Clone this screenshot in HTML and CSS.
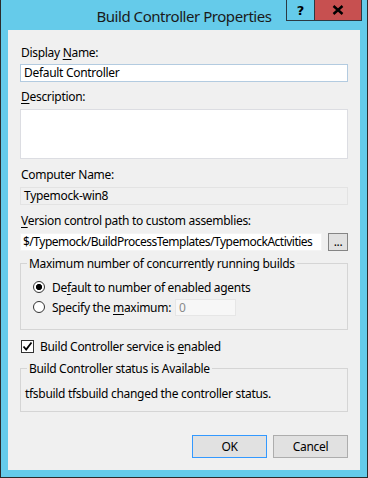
FILE: index.html
```html
<!DOCTYPE html>
<html>
<head>
    <title>Build Controller Properties</title>
    <link rel="stylesheet" href="styles.css">
</head>
<body>
    <div class="window">
        <div class="titlebar">
            <span class="title">Build Controller Properties</span>
            <div class="caption-buttons">
                <span class="cap-btn help">?</span>
                <span class="cap-btn close">
                    <svg width="12" height="10" viewBox="0 0 12 10">
                        <path d="M1.5 1 L10.5 9 M10.5 1 L1.5 9" stroke="#000" stroke-width="2.4"/>
                    </svg>
                </span>
            </div>
        </div>

        <div class="client">
            <label class="field-label">Display <u>N</u>ame:</label>
            <div class="textbox name-box">Default Controller</div>

            <label class="field-label"><u>D</u>escription:</label>
            <div class="textbox desc-box"></div>

            <label class="field-label">Computer Name:</label>
            <div class="textbox readonly">Typemock-win8</div>

            <label class="field-label"><u>V</u>ersion control path to custom assemblies:</label>
            <div class="path-row">
                <div class="textbox path-box">$/Typemock/BuildProcessTemplates/TypemockActivities</div>
                <span class="btn browse">...</span>
            </div>

            <fieldset class="group max-group">
                <legend>Maximum number of concurrently running builds</legend>
                <div class="group-body">
                    <div class="option">
                        <span class="radio checked"></span>
                        <span>De<u>f</u>ault to number of enabled agents</span>
                    </div>
                    <div class="option">
                        <span class="radio"></span>
                        <span>Specify the <u>m</u>aximum:</span>
                        <span class="textbox num-box">0</span>
                    </div>
                </div>
            </fieldset>

            <div class="option check-row">
                <span class="checkbox">
                    <svg width="11" height="11" viewBox="0 0 11 11">
                        <path d="M1.5 5.5 L4.2 8.5 L9.5 1.5" fill="none" stroke="#000" stroke-width="1.8"/>
                    </svg>
                </span>
                <span>Build Controller service is <u>e</u>nabled</span>
            </div>

            <fieldset class="group status-group">
                <legend>Build Controller status is Available</legend>
                <div class="status-text">tfsbuild tfsbuild changed the controller status.</div>
            </fieldset>

            <div class="dialog-buttons">
                <span class="btn default">OK</span>
                <span class="btn">Cancel</span>
            </div>
        </div>
    </div>
</body>
</html>
```

FILE: styles.css
```css
body {
    margin: 0;
    font-family: "Noto Sans", "Open Sans", sans-serif;
    font-size: 12px;
    letter-spacing: -0.3px;
    color: #000;
}
u {
    text-decoration-thickness: 1px;
    text-underline-offset: 2px;
}
.window {
    width: 368px;
    height: 478px;
    box-sizing: border-box;
    background: #65cbea;
    border: 1px solid #2b2b2b;
    border-top: none;
    padding: 0 7px 7px 7px;
    display: flex;
    flex-direction: column;
}
.titlebar {
    height: 30px;
    position: relative;
    display: flex;
    justify-content: center;
    align-items: center;
}
.title {
    font-size: 15px;
    letter-spacing: -0.45px;
    color: #1a1a1a;
    margin-top: 1px;
}
.caption-buttons {
    position: absolute;
    top: 0;
    right: -2px;
    display: flex;
}
.cap-btn {
    height: 20px;
    border: 1px solid #2b3a44;
    border-top: none;
    display: flex;
    align-items: center;
    justify-content: center;
}
.help {
    width: 27px;
    font-family: "DejaVu Sans", sans-serif;
    font-weight: bold;
    font-size: 13px;
    letter-spacing: 0;
    border-right: none;
}
.close {
    width: 46px;
    background: #c75050;
}
.client {
    flex: 1;
    background: #f0f0f0;
    padding: 15px 12px 0 12px;
    display: flex;
    flex-direction: column;
}
.field-label {
    line-height: 15px;
    margin-left: 1px;
}
.textbox {
    box-sizing: border-box;
    height: 18px;
    background: #fff;
    border: 1px solid #dcdde2;
    padding: 0 3px;
    line-height: 16px;
    white-space: nowrap;
    overflow: hidden;
}
.name-box {
    margin: 4px 0 7px;
    border-color: #b3cbe0;
}
.desc-box {
    height: 50px;
    margin: 5px 0 8px;
}
.readonly {
    background: #f0f0f0;
    border-color: #e3e3e3;
    margin: 5px 0 8px;
}
.path-row {
    display: flex;
    gap: 6px;
    margin-top: 5px;
}
.path-box {
    flex: 1;
    border-color: #f4f4f4;
    padding: 0 2px;
    letter-spacing: -0.5px;
}
.btn {
    box-sizing: border-box;
    background: #e1e1e1;
    border: 1px solid #adadad;
    display: flex;
    align-items: center;
    justify-content: center;
}
.browse {
    width: 20px;
    height: 18px;
    border-color: #858585;
    line-height: 10px;
}
.group {
    margin: 0;
    border: 1px solid #d5d5d5;
    padding: 0;
    min-width: 0;
}
.group legend {
    padding: 0 2px;
    margin-left: 6px;
    line-height: 15px;
}
.max-group {
    margin-top: 5px;
}
.group-body {
    padding: 6px 0 12px 12px;
}
.option {
    display: flex;
    align-items: center;
    height: 20px;
}
.radio {
    width: 12px;
    height: 12px;
    box-sizing: border-box;
    border: 1px solid #333;
    border-radius: 50%;
    background: #fff;
    margin-right: 7px;
}
.radio.checked {
    background: radial-gradient(circle, #000 2.8px, #fff 3.3px);
}
.num-box {
    width: 61px;
    height: 17px;
    margin-left: 4px;
    background: #f7f7f7;
    border-color: #e6e6e6;
    color: #8a8a8a;
}
.check-row {
    margin: 6px 0 0 1px;
}
.checkbox {
    width: 13px;
    height: 13px;
    box-sizing: border-box;
    border: 1px solid #333;
    background: #fff;
    margin-right: 6px;
    display: flex;
    align-items: center;
    justify-content: center;
}
.status-group {
    margin-top: 5px;
}
.status-text {
    line-height: 15px;
    padding: 10px 0 10px 4px;
}
.dialog-buttons {
    display: flex;
    justify-content: flex-end;
    gap: 6px;
    margin-top: 23px;
}
.dialog-buttons .btn {
    width: 75px;
    height: 23px;
}
.btn.default {
    border-color: #3399ff;
}
```
